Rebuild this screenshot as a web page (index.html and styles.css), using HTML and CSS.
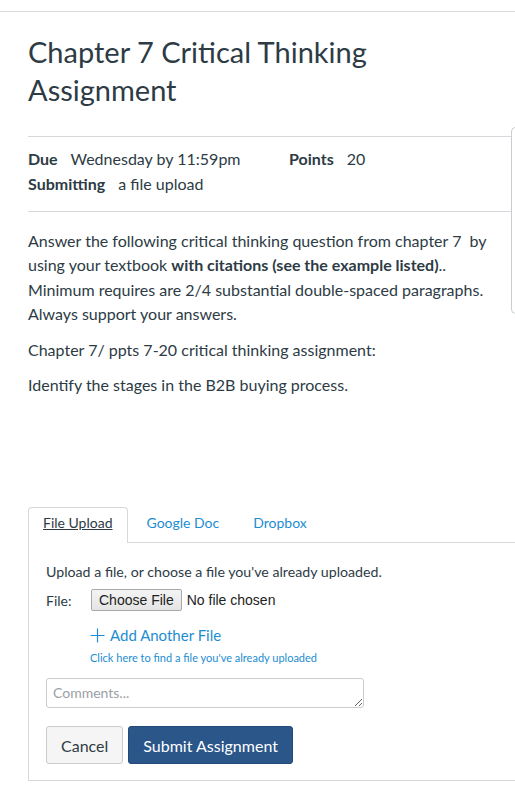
FILE: index.html
```html
<!DOCTYPE html>
<html lang="en">
<head>
    <meta charset="UTF-8">
    <meta name="viewport" content="width=device-width, initial-scale=1.0">
    <title>Chapter 7 Critical Thinking Assignment</title>
    <link rel="stylesheet" href="styles.css">
</head>
<body>
    <div class="top-rule"></div>
    <div class="side-tray"></div>

    <div class="assignment">
        <h1 class="title">Chapter 7 Critical Thinking Assignment</h1>

        <div class="details">
            <div class="detail-row">
                <span class="detail due"><b>Due</b> Wednesday by 11:59pm</span>
                <span class="detail"><b>Points</b> 20</span>
            </div>
            <div class="detail-row">
                <span class="detail"><b>Submitting</b> a file upload</span>
            </div>
        </div>

        <div class="description">
            <p>Answer the following critical thinking question from chapter 7&nbsp; by using your textbook <b>with citations (see the example listed)</b>.. Minimum requires are 2/4 substantial double-spaced paragraphs. Always support your answers.</p>
            <p>Chapter 7/ ppts 7-20 critical thinking assignment:</p>
            <p>Identify the stages in the B2B buying process.</p>
        </div>

        <div class="submit-box">
            <ul class="tabs">
                <li class="tab active"><a href="#">File Upload</a></li>
                <li class="tab"><a href="#">Google Doc</a></li>
                <li class="tab"><a href="#">Dropbox</a></li>
            </ul>
            <div class="panel">
                <p class="hint">Upload a file, or choose a file you've already uploaded.</p>
                <div class="file-row">
                    <span class="file-label">File:</span>
                    <button type="button" class="choose-btn">Choose File</button>
                    <span class="no-file">No file chosen</span>
                </div>
                <div class="file-links">
                    <a href="#" class="add-file">
                        <svg class="plus" width="15" height="15" viewBox="0 0 15 15"><path d="M7.5 0.5v14M0.5 7.5h14" stroke="currentColor" stroke-width="1.2" fill="none"/></svg>Add Another File
                    </a>
                    <a href="#" class="find-file">Click here to find a file you've already uploaded</a>
                </div>
                <textarea class="comments" placeholder="Comments..."></textarea>
                <div class="actions">
                    <button type="button" class="btn">Cancel</button>
                    <button type="button" class="btn btn-primary">Submit Assignment</button>
                </div>
            </div>
        </div>
    </div>
</body>
</html>
```

FILE: styles.css
```css
body { margin: 0; font-family: Lato, "Open Sans", sans-serif; color: #2d3b45; background: #fff; overflow-x: hidden; }
.top-rule { margin-top: 11px; border-top: 1px solid #d9dcdf; }
.side-tray { position: absolute; left: 511px; top: 127px; width: 4px; height: 185px; border: 1px solid #c7cdd1; border-right: none; border-radius: 7px 0 0 7px; background: #fff; }

.assignment { padding-left: 28px; }
.title { margin: 21px 0 27px; font-size: 29px; line-height: 38px; font-weight: 400; }

.details { border-top: 1px solid #d6d9dc; border-bottom: 1px solid #d6d9dc; padding: 10px 0 15px; font-size: 16px; line-height: 24.5px; }
.detail-row { display: flex; }
.detail b { margin-right: 9px; }
.detail.due { width: 261px; }

.description { padding-top: 17px; font-size: 16px; line-height: 24.4px; }
.description p { margin: 0 0 11px; }

.submit-box { margin-top: 110px; font-size: 14px; }
.tabs { list-style: none; margin: 0; padding: 0; display: flex; gap: 4px; position: relative; z-index: 1; }
.tab { border: 1px solid transparent; border-bottom: none; border-radius: 4px 4px 0 0; }
.tab a { display: block; padding: 5px 14px 9px; line-height: 20px; color: #1d8dd2; text-decoration: none; }
.tab.active { border-color: #d6d9dc; background: #fff; margin-bottom: -1px; padding-bottom: 1px; }
.tab.active a { color: #2d3b45; text-decoration: underline; }

.panel { border: 1px solid #d6d9dc; border-right: none; padding: 19px 0 16px 17px; }
.hint { margin: 0; font-size: 14.2px; line-height: 20px; }
.file-row { display: flex; align-items: center; margin-top: 7px; height: 22px; }
.file-label { width: 45px; }
.choose-btn { font-family: "Liberation Sans", Arial, sans-serif; font-size: 14px; color: #222; height: 22px; padding: 0 7px; border: 1px solid #a9a9a9; border-radius: 2px; background: linear-gradient(#f4f4f4, #e4e4e4); }
.no-file { margin-left: 5px; font-family: "Liberation Sans", Arial, sans-serif; font-size: 14px; color: #222; }

.file-links { margin: 14px 0 0 44px; }
.add-file { display: flex; align-items: center; font-size: 15px; line-height: 20px; color: #1d8dd2; text-decoration: none; }
.plus { margin-right: 5px; }
.find-file { display: block; margin-top: 6px; font-size: 11px; line-height: 14px; color: #1d8dd2; text-decoration: none; }

.comments { display: block; box-sizing: border-box; width: 318px; height: 30px; margin-top: 13px; padding: 5px 6px; border: 1px solid #c7cdd1; border-radius: 3px; font-family: Lato, sans-serif; font-size: 14px; color: #2d3b45; resize: vertical; }
.comments::placeholder { color: #9aa0a5; }

.actions { display: flex; gap: 5px; margin-top: 18px; }
.btn { height: 38px; padding: 0 14px; font-family: Lato, sans-serif; font-size: 16px; color: #2d3b45; background: #f5f5f5; border: 1px solid #c7cdd1; border-radius: 3px; cursor: pointer; }
.btn-primary { background: #2a568a; border-color: #234a78; color: #fff; }
```
